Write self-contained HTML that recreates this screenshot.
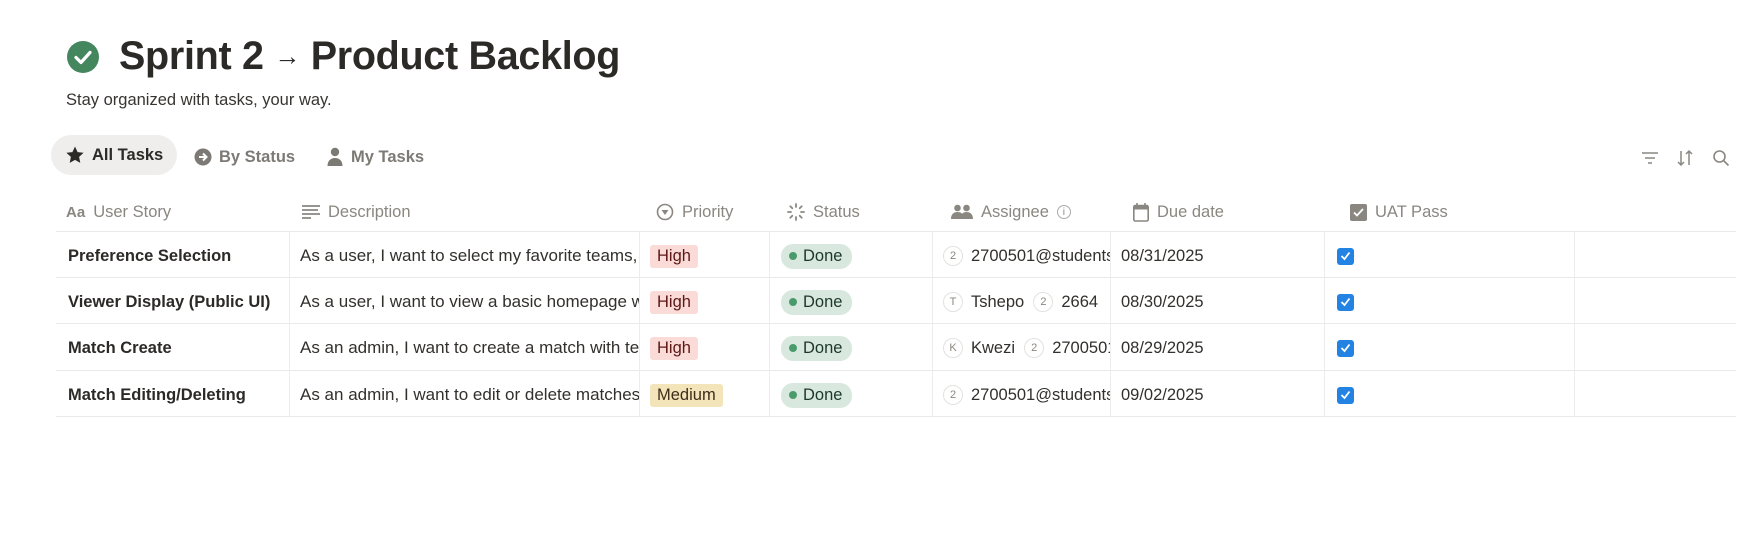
<!DOCTYPE html>
<html><head><meta charset="utf-8"><style>
*{box-sizing:border-box;margin:0;padding:0}
body{width:1763px;height:560px;background:#fff;font-family:"Liberation Sans",sans-serif;color:#32302c;position:relative;overflow:hidden}
.abs{position:absolute}
h1{position:absolute;left:119px;top:34px;font-size:39.5px;font-weight:bold;letter-spacing:-0.3px;color:#2c2a27;white-space:nowrap}
h1 .ar{font-size:26px;font-weight:normal;position:relative;top:-4px}
.sub{left:66px;top:91px;font-size:16.5px;color:#37352f}
.tab{position:absolute;top:137px;height:40px;display:flex;align-items:center;font-size:16.5px;font-weight:bold;color:#7d7a75;gap:7px}
.tab.on{background:#efeeec;border-radius:20px;color:#2c2a27;padding:0 14px 0 14px;top:135px}
.hdr{position:absolute;top:202px;font-size:16.5px;color:#8a8780;display:flex;align-items:center;gap:8px;white-space:nowrap;height:20px}
.hl{position:absolute;left:56px;width:1680px;height:1px;background:#e9e9e7}
.vl{position:absolute;top:232px;height:185px;width:1px;background:#ececea}
.cell{position:absolute;height:46px;display:flex;align-items:center;font-size:16.5px;white-space:nowrap;overflow:hidden;padding-top:2px}
.d{font-size:17px}
.b{font-weight:bold;color:#2c2a27}
.tag{padding:2px 7px;border-radius:3px}
.high{background:#fadbd7;color:#5d1715}
.med{background:#f3e4b9;color:#402c1b}
.done{background:#d9e8df;color:#1c3829;border-radius:12px;padding:3px 10px 3px 8px;display:flex;align-items:center;gap:6px}
.done i{width:8px;height:8px;border-radius:50%;background:#4a9b6c;display:block}
.av{width:20px;height:20px;border-radius:50%;border:1px solid #e3e2e0;font-size:11px;color:#8a8780;display:inline-flex;align-items:center;justify-content:center;margin-right:8px;flex:none}
.cb{width:17px;height:17px;background:#2383e2;border-radius:3px;display:flex;align-items:center;justify-content:center}
</style></head><body>
<svg class="abs" style="left:66px;top:40px" width="34" height="34" viewBox="0 0 34 34"><circle cx="17" cy="17" r="16" fill="#44875f"/><path d="M10 17.5l5 5 9-10" stroke="#fff" stroke-width="3.2" fill="none" stroke-linecap="round" stroke-linejoin="round"/></svg>
<h1>Sprint 2 <span class="ar">→</span> Product Backlog</h1>
<div class="abs sub">Stay organized with tasks, your way.</div>

<div class="tab on" style="left:51px"><svg width="20" height="20" viewBox="0 0 20 20"><path d="M10 1.5l2.6 5.6 6 .7-4.5 4.1 1.2 6L10 14.9 4.7 17.9l1.2-6L1.4 7.8l6-.7z" fill="#2c2a27"/></svg>All Tasks</div>
<div class="tab" style="left:194px"><svg width="18" height="18" viewBox="0 0 18 18"><circle cx="9" cy="9" r="8.5" fill="#7d7a75"/><path d="M5 9h7M9 5.5L12.5 9 9 12.5" stroke="#fff" stroke-width="2" fill="none"/></svg>By Status</div>
<div class="tab" style="left:326px"><svg width="18" height="20" viewBox="0 0 18 20"><circle cx="9" cy="5" r="4.2" fill="#7d7a75"/><path d="M1.5 19c0-5 3-8 7.5-8s7.5 3 7.5 8z" fill="#7d7a75"/></svg>My Tasks</div>

<svg class="abs" style="left:1641px;top:150px" width="18" height="16" viewBox="0 0 18 16"><path d="M1 3h16M4 8h10M7 13h4" stroke="#8a8780" stroke-width="1.6"/></svg>
<svg class="abs" style="left:1676px;top:149px" width="18" height="18" viewBox="0 0 18 18"><path d="M5 2v14M2 13l3 3 3-3M13 16V2M10 5l3-3 3 3" stroke="#8a8780" stroke-width="1.5" fill="none"/></svg>
<svg class="abs" style="left:1712px;top:149px" width="18" height="18" viewBox="0 0 18 18"><circle cx="7.5" cy="7.5" r="5.5" stroke="#8a8780" stroke-width="1.6" fill="none"/><path d="M11.5 11.5l5 5" stroke="#8a8780" stroke-width="1.6"/></svg>

<div class="hdr" style="left:66px"><span style="font-weight:bold;font-size:15px;color:#8a8780">Aa</span>User Story</div>
<div class="hdr" style="left:302px"><svg width="18" height="14" viewBox="0 0 18 14"><path d="M0 1h18M0 5h16M0 9h18M0 13h9" stroke="#8a8780" stroke-width="1.7"/></svg>Description</div>
<div class="hdr" style="left:656px"><svg width="18" height="18" viewBox="0 0 18 18"><circle cx="9" cy="9" r="7.5" stroke="#8a8780" stroke-width="1.6" fill="none"/><path d="M5.5 7h7L9 12z" fill="#8a8780"/></svg>Priority</div>
<div class="hdr" style="left:787px"><svg width="18" height="18" viewBox="0 0 18 18" stroke="#8a8780" stroke-width="1.8" stroke-linecap="round"><path d="M9 1v3M9 14v3M1 9h3M14 9h3M3.3 3.3l2 2M12.7 12.7l2 2M3.3 14.7l2-2M12.7 5.3l2-2"/></svg>Status</div>
<div class="hdr" style="left:951px"><svg width="22" height="16" viewBox="0 0 22 16" fill="#8a8780"><circle cx="6.5" cy="4" r="3.3"/><circle cx="15.5" cy="4" r="3.3"/><path d="M0 15c0-5 3-7 6.5-7s6.5 2 6.5 7zM10 15c0-5 2-7 5.5-7s6.5 2 6.5 7z"/></svg>Assignee <span style="border:1px solid #aaa;border-radius:50%;width:14px;height:14px;display:inline-flex;align-items:center;justify-content:center;font-size:10px">i</span></div>
<div class="hdr" style="left:1133px"><svg width="16" height="19" viewBox="0 0 16 19"><rect x="0.8" y="2.5" width="14.4" height="15.5" rx="1.5" stroke="#8a8780" stroke-width="1.6" fill="none"/><rect x="0.8" y="2.5" width="14.4" height="4" fill="#8a8780"/><path d="M4 0v4M12 0v4" stroke="#8a8780" stroke-width="1.6"/></svg>Due date</div>
<div class="hdr" style="left:1350px"><svg width="17" height="17" viewBox="0 0 17 17"><rect width="17" height="17" rx="2" fill="#8a8780"/><path d="M4 8.5l3 3 6-6.5" stroke="#fff" stroke-width="1.8" fill="none"/></svg>UAT Pass</div>

<div class="hl" style="top:231px"></div>
<div class="hl" style="top:277px"></div>
<div class="hl" style="top:323px"></div>
<div class="hl" style="top:370px"></div>
<div class="hl" style="top:416px"></div>
<div class="vl" style="left:289px"></div>
<div class="vl" style="left:639px"></div>
<div class="vl" style="left:769px"></div>
<div class="vl" style="left:932px"></div>
<div class="vl" style="left:1110px"></div>
<div class="vl" style="left:1324px"></div>
<div class="vl" style="left:1574px"></div>

<div class="cell b" style="left:68px;top:232px">Preference Selection</div>
<div class="cell d" style="left:300px;top:232px;width:339px">As a user, I want to select my favorite teams, so that I see relevant matches</div>
<div class="cell" style="left:650px;top:232px"><span class="tag high">High</span></div>
<div class="cell" style="left:781px;top:232px"><span class="done"><i></i>Done</span></div>
<div class="cell" style="left:943px;top:232px;width:167px"><span class="av">2</span>2700501@students.wits.ac.za</div>
<div class="cell" style="left:1121px;top:232px">08/31/2025</div>
<div class="cell" style="left:1337px;top:232px"><span class="cb"><svg width="11" height="10" viewBox="0 0 11 10"><path d="M1.5 5l3 3 5-6.5" stroke="#fff" stroke-width="1.8" fill="none"/></svg></span></div>

<div class="cell b" style="left:68px;top:278px">Viewer Display (Public UI)</div>
<div class="cell d" style="left:300px;top:278px;width:339px">As a user, I want to view a basic homepage with live matches</div>
<div class="cell" style="left:650px;top:278px"><span class="tag high">High</span></div>
<div class="cell" style="left:781px;top:278px"><span class="done"><i></i>Done</span></div>
<div class="cell" style="left:943px;top:278px;width:167px"><span class="av">T</span>Tshepo&nbsp;&nbsp;<span class="av">2</span>2664</div>
<div class="cell" style="left:1121px;top:278px">08/30/2025</div>
<div class="cell" style="left:1337px;top:278px"><span class="cb"><svg width="11" height="10" viewBox="0 0 11 10"><path d="M1.5 5l3 3 5-6.5" stroke="#fff" stroke-width="1.8" fill="none"/></svg></span></div>

<div class="cell b" style="left:68px;top:324px">Match Create</div>
<div class="cell d" style="left:300px;top:324px;width:339px">As an admin, I want to create a match with teams and time</div>
<div class="cell" style="left:650px;top:324px"><span class="tag high">High</span></div>
<div class="cell" style="left:781px;top:324px"><span class="done"><i></i>Done</span></div>
<div class="cell" style="left:943px;top:324px;width:167px"><span class="av">K</span>Kwezi&nbsp;&nbsp;<span class="av">2</span>2700501</div>
<div class="cell" style="left:1121px;top:324px">08/29/2025</div>
<div class="cell" style="left:1337px;top:324px"><span class="cb"><svg width="11" height="10" viewBox="0 0 11 10"><path d="M1.5 5l3 3 5-6.5" stroke="#fff" stroke-width="1.8" fill="none"/></svg></span></div>

<div class="cell b" style="left:68px;top:371px">Match Editing/Deleting</div>
<div class="cell d" style="left:300px;top:371px;width:339px">As an admin, I want to edit or delete matches</div>
<div class="cell" style="left:650px;top:371px"><span class="tag med">Medium</span></div>
<div class="cell" style="left:781px;top:371px"><span class="done"><i></i>Done</span></div>
<div class="cell" style="left:943px;top:371px;width:167px"><span class="av">2</span>2700501@students.wits.ac.za</div>
<div class="cell" style="left:1121px;top:371px">09/02/2025</div>
<div class="cell" style="left:1337px;top:371px"><span class="cb"><svg width="11" height="10" viewBox="0 0 11 10"><path d="M1.5 5l3 3 5-6.5" stroke="#fff" stroke-width="1.8" fill="none"/></svg></span></div>
</body></html>
